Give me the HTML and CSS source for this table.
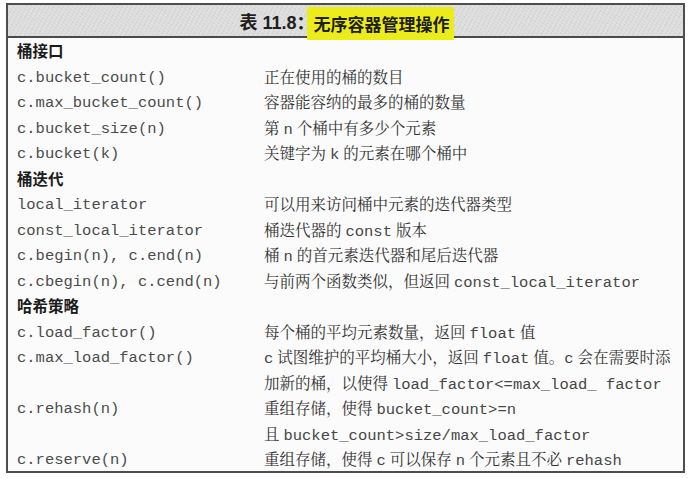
FILE: index.html
```html
<!DOCTYPE html>
<html lang="zh-CN">
<head>
<meta charset="utf-8">
<title>表 11.8：无序容器管理操作</title>
<link rel="stylesheet" href="styles.css">
</head>
<body>
<div class="table">
  <div class="caption"><span class="num">表 11.8：</span><span class="hl">无序容器管理操作</span></div>
  <div class="body">
    <div class="sec">桶接口</div>
    <div class="k">c.bucket_count()</div><div class="v">正在使用的桶的数目</div>
    <div class="k">c.max_bucket_count()</div><div class="v">容器能容纳的最多的桶的数量</div>
    <div class="k">c.bucket_size(n)</div><div class="v">第 <span class="m">n</span> 个桶中有多少个元素</div>
    <div class="k">c.bucket(k)</div><div class="v">关键字为 <span class="m">k</span> 的元素在哪个桶中</div>
    <div class="sec">桶迭代</div>
    <div class="k">local_iterator</div><div class="v">可以用来访问桶中元素的迭代器类型</div>
    <div class="k">const_local_iterator</div><div class="v">桶迭代器的 <span class="m">const</span> 版本</div>
    <div class="k">c.begin(n), c.end(n)</div><div class="v">桶 <span class="m">n</span> 的首元素迭代器和尾后迭代器</div>
    <div class="k">c.cbegin(n), c.cend(n)</div><div class="v">与前两个函数类似，但返回 <span class="m">const_local_iterator</span></div>
    <div class="sec">哈希策略</div>
    <div class="k">c.load_factor()</div><div class="v">每个桶的平均元素数量，返回 <span class="m">float</span> 值</div>
    <div class="k two">c.max_load_factor()</div><div class="v two"><span class="ln"><span class="m">c</span> 试图维护的平均桶大小，返回 <span class="m">float</span> 值。<span class="m">c</span> 会在需要时添</span><span class="ln">加新的桶，以使得 <span class="m">load_factor&lt;=max_load_ factor</span></span></div>
    <div class="k two">c.rehash(n)</div><div class="v two"><span class="ln">重组存储，使得 <span class="m">bucket_count&gt;=n</span></span><span class="ln">且 <span class="m">bucket_count&gt;size/max_load_factor</span></span></div>
    <div class="k">c.reserve(n)</div><div class="v">重组存储，使得 <span class="m">c</span> 可以保存 <span class="m">n</span> 个元素且不必 <span class="m">rehash</span></div>
  </div>
</div>
</body>
</html>
```

FILE: styles.css
```css
html, body {
  margin: 0;
  padding: 0;
  background: #ffffff;
}

body {
  padding: 3px 0 0 6px;
}

.table {
  box-sizing: border-box;
  width: 679px;
  height: 470px;
  border: 2px solid #4e4e4e;
  background: #fbfbfb;
}

.caption {
  box-sizing: border-box;
  height: 33px;
  border-bottom: 2px solid #4a4a4a;
  background-color: #dcdcdc;
  background-image:
    repeating-linear-gradient(37deg, rgba(255,255,255,0.18) 0 1px, transparent 1px 3px),
    repeating-linear-gradient(-61deg, rgba(0,0,0,0.04) 0 1px, transparent 1px 4px);
  display: flex;
  justify-content: center;
  align-items: flex-start;
  padding-top: 2px;
  padding-left: 2px;
  font-family: "Liberation Sans", "Noto Sans CJK SC", sans-serif;
  font-weight: bold;
  font-size: 18px;
  color: #1e1e1e;
}

.num {
  line-height: 33px;
}

.hl {
  display: inline-block;
  height: 33px;
  line-height: 33px;
  padding: 0 4px 0 7px;
  margin-left: -8px;
  background: #ecec1a;
  font-family: "Noto Sans CJK SC", sans-serif;
  font-size: 17px;
}

.body {
  display: grid;
  grid-template-columns: 247px 1fr;
  grid-auto-rows: 25.5px;
  padding-left: 9px;
  line-height: 25.5px;
  font-size: 15.5px;
}

.sec {
  grid-column: 1 / -1;
  font-family: "Noto Sans CJK SC", sans-serif;
  font-weight: bold;
  color: #1c1c1c;
}

.k {
  font-family: "Liberation Mono", monospace;
  color: #4c4c4c;
  white-space: pre;
  padding-top: 2px;
}

.v {
  font-family: "Noto Serif CJK SC", "Noto Sans CJK SC", serif;
  color: #333333;
  white-space: nowrap;
}

.two {
  grid-row: span 2;
}

.v.two {
  display: grid;
  grid-template-rows: 25.5px 25.5px;
}

.ln {
  display: block;
  height: 25.5px;
}

.m {
  font-family: "Liberation Mono", monospace;
  color: #464646;
}
```
